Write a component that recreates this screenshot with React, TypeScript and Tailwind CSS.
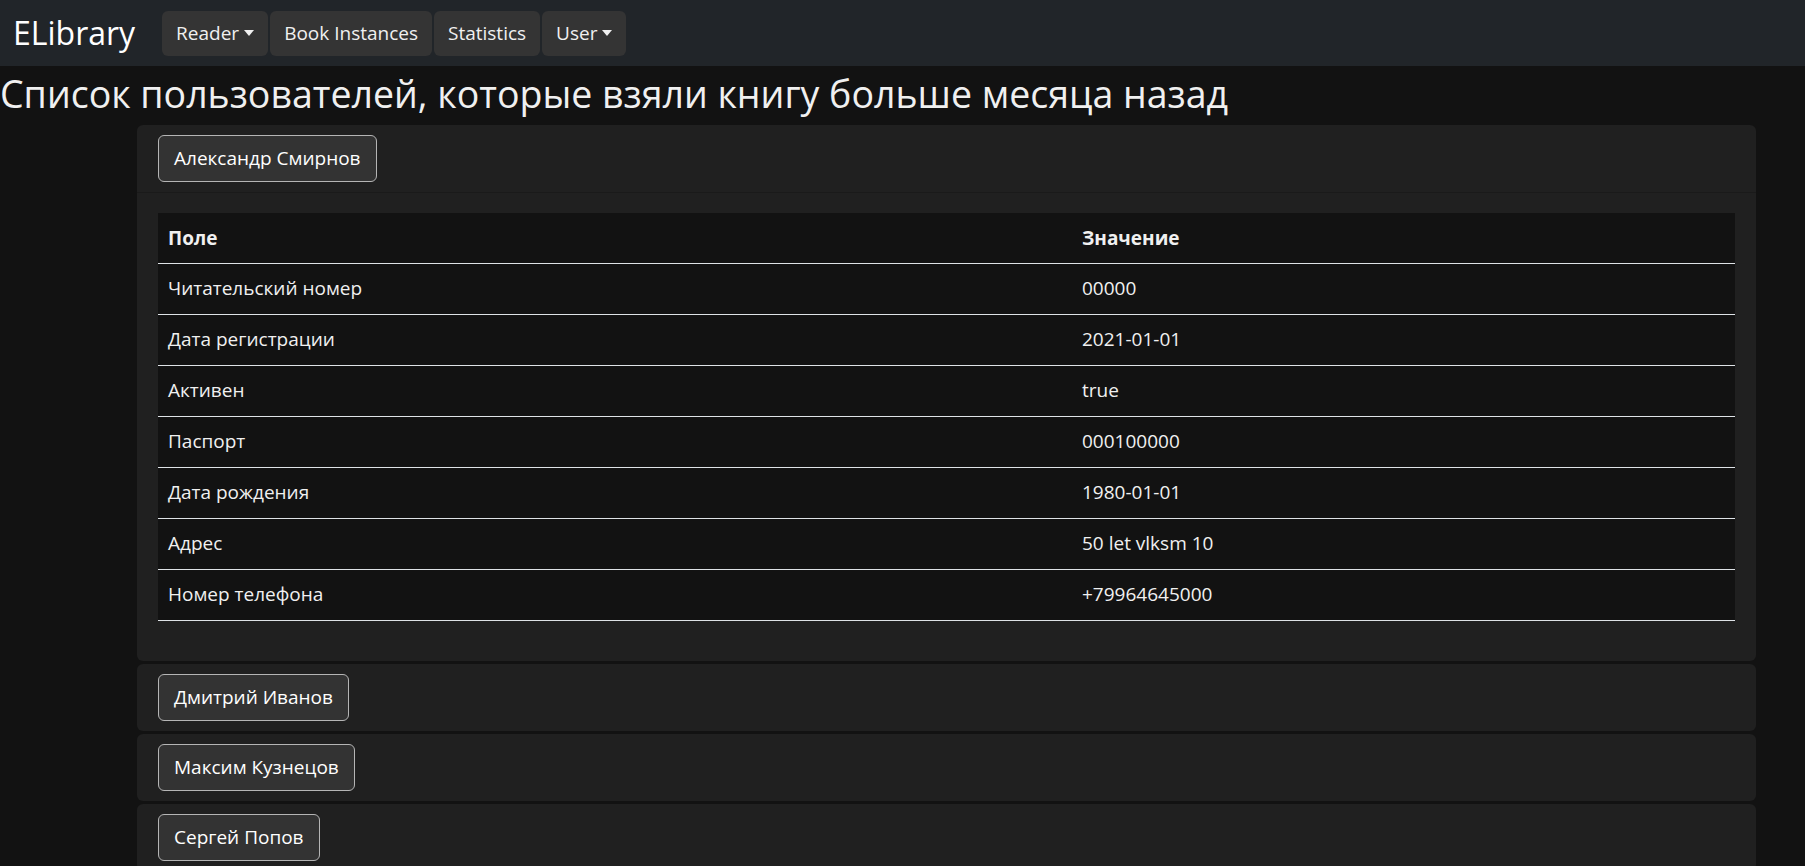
import React from "react";

interface Field {
  name: string,
  value: string
};

const fields: Field[] = [
  { name: "Читательский номер", value: "00000" },
  { name: "Дата регистрации", value: "2021-01-01" },
  { name: "Активен", value: "true" },
  { name: "Паспорт", value: "000100000" },
  { name: "Дата рождения", value: "1980-01-01" },
  { name: "Адрес", value: "50 let vlksm 10" },
  { name: "Номер телефона", value: "+79964645000" },
];

const users = ["Александр Смирнов", "Дмитрий Иванов", "Максим Кузнецов", "Сергей Попов"];

function Caret() {
  return <span className="inline-block ml-[5px] align-middle border-t-[6px] border-t-[#f0f0f0] border-x-[5px] border-x-transparent" />;
}

function NavButton({ label, dropdown }: { label: string, dropdown?: boolean }) {
  return (
    <button className="h-[45px] px-[14px] rounded-md bg-[#343434] text-[19px] text-[#f0f0f0] flex items-center">
      {label}
      {dropdown && <Caret />}
    </button>
  );
}

function App() {
  return (
    <div className="min-h-screen bg-[#121212] text-[#e9ecef] font-['Open_Sans',sans-serif]">
      <nav className="h-[66px] bg-[#212529] flex items-center px-[13px]">
        <span className="text-[32px] text-white mr-[27px] leading-none">ELibrary</span>
        <div className="flex gap-[2px]">
          <NavButton label="Reader" dropdown />
          <NavButton label="Book Instances" />
          <NavButton label="Statistics" />
          <NavButton label="User" dropdown />
        </div>
      </nav>
      <h1 className="text-[37.5px] leading-[1.2] mt-[5px] mb-[9px] text-[#f0f0f0]">
        Список пользователей, которые взяли книгу больше месяца назад
      </h1>
      <div className="ml-[137px] w-[1619px] flex flex-col gap-[3px]">
        {users.map((user, i) => (
          <div key={user} className="bg-[#202020] rounded-md">
            <div className={`px-[21px] py-[10px] ${i === 0 ? "border-b border-[#1a1a1a]" : ""}`}>
              <button className="h-[47px] px-[15px] rounded-md border border-[#b5b5b5] bg-[#333333] text-[19px] text-white">
                {user}
              </button>
            </div>
            {i === 0 && (
              <div className="px-[21px] pt-[20px] pb-[40px]">
                <table className="w-full bg-[#121212] text-[19px] text-[#f0f0f0] border-collapse">
                  <thead>
                    <tr className="border-b border-[#dee2e6]">
                      <th className="w-[914px] h-[50px] px-[10px] text-left font-bold">Поле</th>
                      <th className="h-[50px] px-[10px] text-left font-bold">Значение</th>
                    </tr>
                  </thead>
                  <tbody>
                    {fields.map((f) => (
                      <tr key={f.name} className="border-b border-[#dee2e6]">
                        <td className="h-[51px] px-[10px]">{f.name}</td>
                        <td className="h-[51px] px-[10px]">{f.value}</td>
                      </tr>
                    ))}
                  </tbody>
                </table>
              </div>
            )}
          </div>
        ))}
      </div>
    </div>
  );
};

export default App;
